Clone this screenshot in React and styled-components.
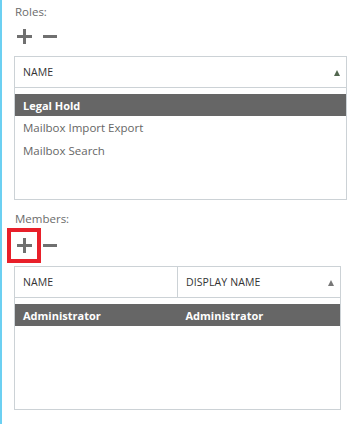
import React from "react";
import styled, { createGlobalStyle } from "styled-components";

const GlobalStyle = createGlobalStyle`
  html, body {
    margin: 0;
    padding: 0;
    background: #ffffff;
  }
  body {
    font-family: "Open Sans", "Noto Sans", sans-serif;
  }
`;

const Page = styled.div`
  display: flex;
  width: 355px;
  height: 424px;
  background: #ffffff;
  overflow: hidden;
`;

const SideBar = styled.div`
  width: 2px;
  flex: none;
  background: #6cd0f2;
`;

const Content = styled.div`
  flex: 1;
  padding: 4px 0 0 12px;
  display: flex;
  flex-direction: column;
`;

const Section = styled.div`
  display: flex;
  flex-direction: column;
  margin-top: ${(p) => p.$top || 0}px;
`;

const Label = styled.div`
  font-size: 11.5px;
  line-height: 16px;
  color: #6b6b6b;
  padding-left: 1px;
`;

const Toolbar = styled.div`
  position: relative;
  display: flex;
  align-items: center;
  gap: 11px;
  height: 16px;
  margin-top: ${(p) => p.$gap}px;
  padding-left: 3px;
`;

const IconButton = styled.span`
  display: flex;
  align-items: center;
  justify-content: center;
  width: 15px;
  height: 15px;
  color: #707070;
`;

const Highlight = styled.div`
  position: absolute;
  left: -7px;
  top: -9px;
  width: 26px;
  height: 27px;
  border: 4px solid #e8202a;
`;

const Table = styled.div`
  margin-top: ${(p) => p.$gap}px;
  width: ${(p) => p.$width}px;
  height: ${(p) => p.$height}px;
  border: 1px solid #ccd2d6;
  box-sizing: border-box;
  display: flex;
  flex-direction: column;
`;

const HeaderRow = styled.div`
  display: flex;
  height: 30px;
  border-bottom: 1px solid #ccd2d6;
  margin-bottom: 6px;
  flex: none;
`;

const HeaderCell = styled.div`
  flex: 1;
  display: flex;
  align-items: center;
  justify-content: space-between;
  padding: 0 6px 0 8px;
  font-size: 10.5px;
  color: #333333;
  letter-spacing: 0.1px;
  & + & {
    border-left: 1px solid #ccd2d6;
  }
`;

const SortArrow = styled.span`
  width: 0;
  height: 0;
  border-left: 3.5px solid transparent;
  border-right: 3.5px solid transparent;
  border-bottom: 6px solid ${(p) => p.$color};
  margin-top: 1px;
`;

const Row = styled.div`
  display: flex;
  height: ${(p) => (p.$selected ? 22 : 23)}px;
  align-items: center;
  background: ${(p) => (p.$selected ? "#666666" : "transparent")};
  color: ${(p) => (p.$selected ? "#ffffff" : "#666666")};
  font-weight: ${(p) => (p.$selected ? 700 : 400)};
  font-size: ${(p) => (p.$selected ? 11 : 11.5)}px;
  flex: none;
`;

const Cell = styled.div`
  flex: 1;
  padding-left: 8px;
  white-space: nowrap;
`;

const PlusIcon = () => (
  <svg width="15" height="15" viewBox="0 0 15 15">
    <rect x="6" y="0" width="3" height="15" fill="currentColor" />
    <rect x="0" y="6" width="15" height="3" fill="currentColor" />
  </svg>
);

const MinusIcon = () => (
  <svg width="15" height="15" viewBox="0 0 15 15">
    <rect x="0" y="6" width="14" height="3" fill="currentColor" />
  </svg>
);

const roles = [
  { name: "Legal Hold", selected: true },
  { name: "Mailbox Import Export" },
  { name: "Mailbox Search" },
];

const members = [{ name: "Administrator", display: "Administrator", selected: true }];

export default function App() {
  return (
    <>
      <GlobalStyle />
      <Page>
        <SideBar />
        <Content>
          <Section>
            <Label>Roles:</Label>
            <Toolbar $gap={8}>
              <IconButton><PlusIcon /></IconButton>
              <IconButton><MinusIcon /></IconButton>
            </Toolbar>
            <Table $gap={12} $width={333} $height={144}>
              <HeaderRow>
                <HeaderCell>
                  NAME
                  <SortArrow $color="#52674f" />
                </HeaderCell>
              </HeaderRow>
              {roles.map((r) => (
                <Row key={r.name} $selected={r.selected}>
                  <Cell>{r.name}</Cell>
                </Row>
              ))}
            </Table>
          </Section>
          <Section $top={11}>
            <Label>Members:</Label>
            <Toolbar $gap={10}>
              <Highlight />
              <IconButton><PlusIcon /></IconButton>
              <IconButton><MinusIcon /></IconButton>
            </Toolbar>
            <Table $gap={13} $width={327} $height={144}>
              <HeaderRow>
                <HeaderCell>NAME</HeaderCell>
                <HeaderCell>
                  DISPLAY NAME
                  <SortArrow $color="#777777" />
                </HeaderCell>
              </HeaderRow>
              {members.map((m) => (
                <Row key={m.name} $selected={m.selected}>
                  <Cell>{m.name}</Cell>
                  <Cell>{m.display}</Cell>
                </Row>
              ))}
            </Table>
          </Section>
        </Content>
      </Page>
    </>
  );
}
